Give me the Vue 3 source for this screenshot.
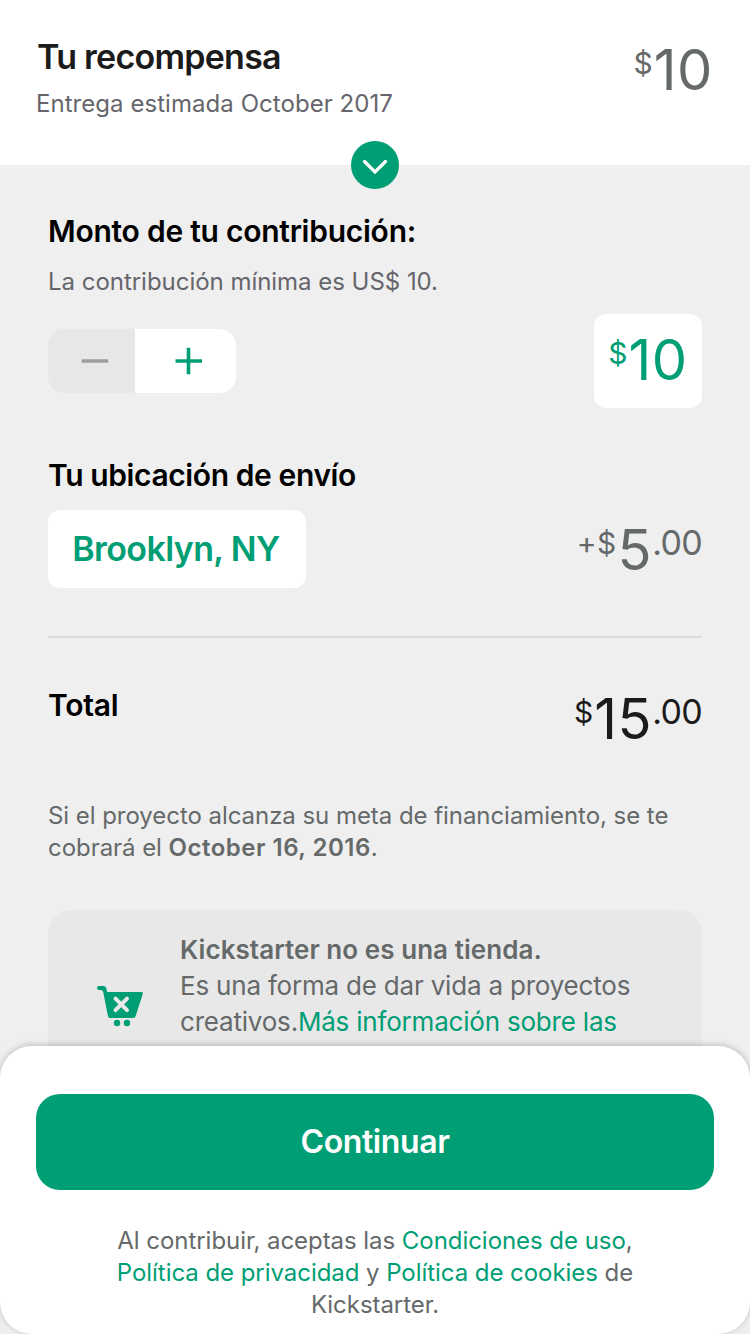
<script setup>
</script>

<template>
  <main class="screen">
    <header class="reward">
      <div>
        <h1>Tu recompensa</h1>
        <p>Entrega estimada October 2017</p>
      </div>
      <div class="price head-price"><span class="cur">$</span><span class="num">10</span></div>
      <button class="chevron" aria-label="Expandir">
        <svg width="48" height="48" viewBox="0 0 48 48"><path d="M13.5 20.5 L24 31 L34.5 20.5" fill="none" stroke="#fff" stroke-width="3.2" stroke-linecap="round"/></svg>
      </button>
    </header>

    <section class="content">
      <h2 class="t-amount">Monto de tu contribución:</h2>
      <p class="minimum">La contribución mínima es US$ 10.</p>
      <div class="row amount-row">
        <div class="stepper">
          <button class="minus" aria-label="Menos"><svg width="28" height="28" viewBox="0 0 28 28"><path d="M.7 14H27.2" stroke="#9b9e9e" stroke-width="3.6"/></svg></button>
          <button class="plus" aria-label="Más"><svg width="28" height="28" viewBox="0 0 28 28"><path d="M.5 14H27M13.5 .7V27.2" stroke="#009e74" stroke-width="3.6"/></svg></button>
        </div>
        <div class="price amount-box"><span class="cur">$</span><span class="num">10</span></div>
      </div>
      <h2 class="t-ship">Tu ubicación de envío</h2>
      <div class="row ship-row">
        <button class="location">Brooklyn, NY</button>
        <div class="price ship-price"><span class="cur plus-cur">+$</span><span class="num">5</span><span class="cents">.00</span></div>
      </div>
      <div class="divider"></div>
      <div class="row total-row">
        <h2 class="t-total">Total</h2>
        <div class="price total-price"><span class="cur">$</span><span class="num">15</span><span class="cents">.00</span></div>
      </div>
      <p class="notice">Si el proyecto alcanza su meta de financiamiento, se te<br>cobrará el <b>October 16, 2016</b>.</p>
      <div class="info">
        <svg class="cart" width="48" height="42" viewBox="0 0 48 42">
          <path d="M3 1H7.5Q9.7 1 10.3 3.2L11.2 7H45.5Q47.4 7 46.8 8.8L39.6 31.2Q39 33 37.1 33H14.1Q12.4 33 12 31.2L7.3 7.5Q6.8 5 5 5H3A2 2 0 0 1 3 1Z" fill="#009e74"/>
          <path d="M19.5 13.7L31 25.2M31 13.7L19.5 25.2" stroke="#e8e8e8" stroke-width="4" stroke-linecap="round"/>
          <circle cx="21" cy="38" r="3.2" fill="#009e74"/><circle cx="31" cy="38" r="3.2" fill="#009e74"/>
        </svg>
        <p><b>Kickstarter no es una tienda.</b><br>Es una forma de dar vida a proyectos<br>creativos.<a>Más información sobre las</a></p>
      </div>
    </section>

    <footer class="sheet">
      <button class="continue">Continuar</button>
      <p>Al contribuir, aceptas las <a>Condiciones de uso</a>,<br><a>Política de privacidad</a> y <a>Política de cookies</a> de<br>Kickstarter.</p>
    </footer>
  </main>
</template>

<style>
body { margin: 0; background: #efefef; }
</style>

<style scoped>
* { box-sizing: border-box; }
h1, h2, p { margin: 0; }
button { border: 0; padding: 0; font: inherit; display: flex; align-items: center; justify-content: center; }
.screen { width: 750px; height: 1334px; overflow: hidden; position: relative; background: #efefef; font-family: Inter, "Liberation Sans", sans-serif; color: #656969; font-size: 24px; line-height: 32px; letter-spacing: -.05px; white-space: nowrap; }
.reward { position: relative; height: 165px; background: #fff; padding: 36px 37px 0 36px; display: flex; justify-content: space-between; }
h1 { font-size: 34px; line-height: 42px; font-weight: 600; color: #1b1b1b; letter-spacing: -.75px; margin-left: 1px; }
.reward p { margin-top: 10px; letter-spacing: .05px; color: #65656b; }
.chevron { position: absolute; left: 351px; top: 141px; width: 48px; height: 48px; border-radius: 50%; background: #009e74; z-index: 1; }
.content { padding: 46px 48px 0; }
h2 { font-size: 30px; line-height: 40px; font-weight: 600; color: #000; letter-spacing: -.25px; }
.minimum { margin-top: 15px; color: #65656b; letter-spacing: -.03px; }
.row { display: flex; justify-content: space-between; }
.amount-row { margin-top: 16px; height: 94px; }
.stepper { display: flex; width: 188px; height: 64px; margin-top: 15px; border-radius: 16px; overflow: hidden; }
.minus { width: 87px; background: #e7e7e7; padding-left: 6px; }
.plus { flex: 1; background: #fff; padding-left: 6px; }
.price { display: flex; align-items: flex-start; letter-spacing: 0; }
.num { font-size: 56px; line-height: 68px; margin-left: 1px; letter-spacing: .6px; }
.cur { font-size: 30px; line-height: 42px; margin-top: 6px; }
.plus-cur { letter-spacing: .4px; }
.cents { font-size: 34px; line-height: 42px; margin-top: 6px; letter-spacing: -.7px; }
.amount-box { width: 108px; height: 94px; border-radius: 12px; background: #fff; color: #009e74; justify-content: center; padding-top: 12px; }
.t-ship { margin-top: 47px; letter-spacing: -.4px; }
.ship-row { margin-top: 15px; height: 78px; }
.location { width: 258px; background: #fff; border-radius: 12px; color: #009e74; font-size: 34px; font-weight: 600; letter-spacing: -.6px; padding-right: 2px; }
.ship-price { padding-top: 6px; }
.divider { height: 2px; background: #dcdcdc; margin-top: 48px; }
.total-row { margin-top: 47px; height: 68px; }
.total-price { color: #1b1b1b; }
.notice { margin-top: 47px; }
b { font-weight: 600; }
.notice b { letter-spacing: .5px; }
.info { margin-top: 46px; background: #e8e8e8; border-radius: 24px; height: 180px; padding: 22px 48px; display: flex; gap: 36px; font-size: 26px; line-height: 36px; letter-spacing: -.2px; }
.info b { letter-spacing: .05px; }
.cart { margin-top: 53px; flex: none; }
a { color: #009e74; }
.sheet { position: absolute; left: 0; top: 1046px; width: 750px; height: 288px; background: #fff; border-radius: 32px; padding: 48px 36px 0; text-align: center; box-shadow: 0 -1px 6px rgba(0,0,0,.22); }
.continue { width: 100%; height: 96px; background: #009e74; border-radius: 24px; color: #fff; font-size: 32px; font-weight: 600; letter-spacing: -.4px; }
.sheet p { margin-top: 35px; }
</style>
